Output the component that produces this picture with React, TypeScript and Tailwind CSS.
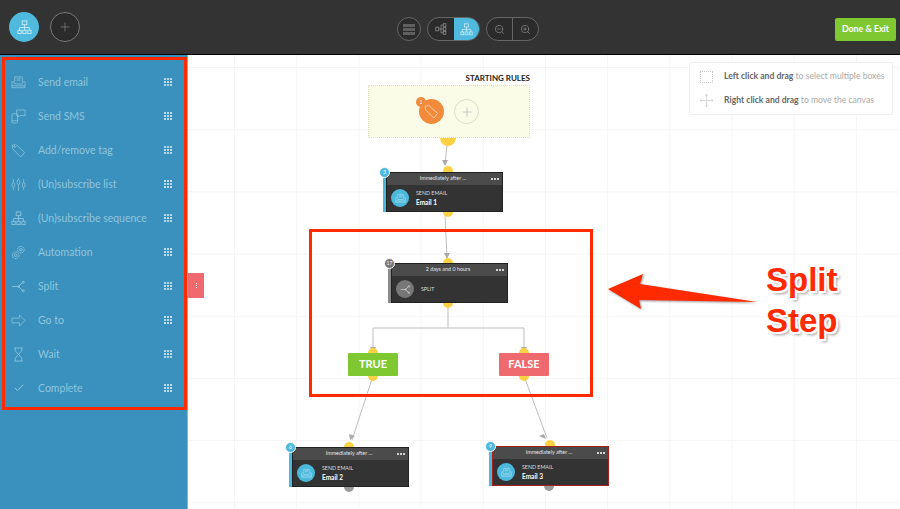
import { ReactNode } from 'react';
import { Plus, ZoomIn, ZoomOut, Check } from 'lucide-react';

const SendIcon = ({ className = '' }: { className?: string }) => (
  <svg viewBox="0 0 16 16" fill="none" stroke="currentColor" strokeWidth="0.8" className={className}>
    <path d="M4 7V2h8v5" />
    <path d="M6 4h4M6 5.500h4" />
    <path d="M1 7.500c0-1 1.800-1 2-.2L4 9.500h8l1-2.200c.3-.8 2-.8 2 .2v6H1z" />
    <path d="M1 11.500h14" />
  </svg>
);

const SplitIcon = ({ className = '' }: { className?: string }) => (
  <svg viewBox="0 0 16 16" fill="none" stroke="currentColor" strokeWidth="0.9" className={className}>
    <path d="M1 8h7l4-4M8 8l4 4" />
    <circle cx="13" cy="3.500" r="1.100" />
    <circle cx="13" cy="12.500" r="1.100" />
    <circle cx="8" cy="8" r="0.900" />
  </svg>
);

const TreeIcon = ({ className = '' }: { className?: string }) => (
  <svg viewBox="0 0 16 16" fill="none" stroke="currentColor" strokeWidth="0.9" className={className}>
    <rect x="5.500" y="1" width="5" height="4" />
    <rect x="1" y="11" width="3.500" height="3.500" />
    <rect x="6.200" y="11" width="3.500" height="3.500" />
    <rect x="11.500" y="11" width="3.500" height="3.500" />
    <path d="M8 5v6M2.800 11V8h10.400v3" />
  </svg>
);

const sideItems: { label: string; icon: ReactNode }[] = [
  { label: 'Send email', icon: <SendIcon className="h-[15px] w-[15px]" /> },
  {
    label: 'Send SMS',
    icon: (
      <svg viewBox="0 0 16 16" fill="none" stroke="currentColor" strokeWidth="0.8" className="h-[15px] w-[15px]">
        <rect x="1" y="5" width="6" height="10" rx="1" />
        <path d="M1 12.500h6" />
        <path d="M6 1h9v6H9.500L8 8.500V7H6z" />
      </svg>
    ),
  },
  {
    label: 'Add/remove tag',
    icon: (
      <svg viewBox="0 0 16 16" fill="none" stroke="currentColor" strokeWidth="0.8" className="h-[15px] w-[15px]">
        <path d="M1 2.500 5 1.500l9.500 8.500-4 5L2 6.500z" />
        <circle cx="3.800" cy="3.800" r="0.800" />
      </svg>
    ),
  },
  {
    label: '(Un)subscribe list',
    icon: (
      <svg viewBox="0 0 16 16" fill="none" stroke="currentColor" strokeWidth="0.8" className="h-[15px] w-[15px]">
        <path d="M2.500 2v12M8 1v14M13.500 2v12" />
        <ellipse cx="2.500" cy="8.500" rx="1.500" ry="2.500" fill="#3a91bd" />
        <ellipse cx="8" cy="5.500" rx="1.500" ry="2.500" fill="#3a91bd" />
        <ellipse cx="13.500" cy="8.500" rx="1.500" ry="2.500" fill="#3a91bd" />
      </svg>
    ),
  },
  { label: '(Un)subscribe sequence', icon: <TreeIcon className="h-[15px] w-[15px]" /> },
  {
    label: 'Automation',
    icon: (
      <svg viewBox="0 0 16 16" fill="none" stroke="currentColor" strokeWidth="1" className="h-[15px] w-[15px]">
        <circle cx="10.500" cy="5" r="3.500" strokeDasharray="1.800 0.500" />
        <circle cx="10.500" cy="5" r="1.300" />
        <circle cx="5" cy="11" r="3.500" strokeDasharray="1.800 0.500" />
        <circle cx="5" cy="11" r="1.300" />
      </svg>
    ),
  },
  { label: 'Split', icon: <SplitIcon className="h-[15px] w-[15px]" /> },
  {
    label: 'Go to',
    icon: (
      <svg viewBox="0 0 16 16" fill="none" stroke="currentColor" strokeWidth="0.8" className="h-[15px] w-[15px]">
        <path d="M1 5.500h8V2l6 6-6 6v-3.500H1z" />
      </svg>
    ),
  },
  {
    label: 'Wait',
    icon: (
      <svg viewBox="0 0 16 16" fill="none" stroke="currentColor" strokeWidth="0.9" className="h-[15px] w-[15px]">
        <path d="M3.500 1h9M3.500 15h9" />
        <path d="M4.500 1v3L8 8l3.500-4V1M4.500 15v-3L8 8l3.500 4v3" />
      </svg>
    ),
  },
  { label: 'Complete', icon: <Check className="ml-[2px] h-[12px] w-[12px]" strokeWidth={2} /> },
];

const Grip = () => (
  <div className="grid grid-cols-3 gap-px">
    {Array.from({ length: 9 }).map((_, i) => (
      <span key={i} className="h-[2px] w-[2px] bg-[#b9dbea]" />
    ))}
  </div>
);

const SideRow = ({ label, icon }: { label: string; icon: ReactNode }) => (
  <div className="flex h-[34px] items-center pl-[11px] pr-[15px] text-[#8fc5de]">
    <span className="flex w-[27px] shrink-0">{icon}</span>
    <span className="flex-1 text-[10.500px] leading-none">{label}</span>
    <Grip />
  </div>
);

const StepCard = ({
  place,
  title,
  badge,
  kind,
  name,
  grey,
  outline,
}: {
  place: string;
  title: string;
  badge: string;
  kind: string;
  name?: string;
  grey?: boolean;
  outline?: string;
}) => (
  <div className={`absolute h-[40px] w-[120px] ${place}`}>
    <div className={`flex h-full border-l-[3px] ${grey ? 'border-l-[#8a8a8a]' : 'border-l-[#4bb8dc]'}`}>
      <div className={`flex flex-1 flex-col border bg-[#333] ${outline ?? 'border-[#222]'}`}>
        <div className="relative flex h-[12px] items-center justify-center bg-[#4b4b4b] pr-[3px] text-[5.400px] leading-none text-[#e4e4e4]">
          {title}
          <span className="absolute right-[3px] flex gap-[1px]">
            <i className="h-[2px] w-[2px] rounded-full bg-white" />
            <i className="h-[2px] w-[2px] rounded-full bg-white" />
            <i className="h-[2px] w-[2px] rounded-full bg-white" />
          </span>
        </div>
        <div className="flex flex-1 items-center pl-[4px]">
          <span
            className={`flex h-[18px] w-[18px] items-center justify-center rounded-full ${
              grey ? 'bg-[#777] text-[#ddd]' : 'bg-[#4bb8dc] text-[#b5e4f3]'
            }`}
          >
            {grey ? <SplitIcon className="h-[11px] w-[11px]" /> : <SendIcon className="h-[11px] w-[11px]" />}
          </span>
          <div className="ml-[7px]">
            <div className="text-[5.300px] leading-[8px] text-[#ddd]">{kind}</div>
            {name && <div className="mt-[1px] text-[6.500px] font-bold leading-[9px] text-white">{name}</div>}
          </div>
        </div>
      </div>
    </div>
    <span
      className={`absolute -left-[4px] -top-[5px] flex h-[11px] w-[11px] items-center justify-center rounded-full border border-white text-[5px] leading-none text-white ${
        grey ? 'bg-[#777]' : 'bg-[#4bb8dc]'
      }`}
    >
      {badge}
    </span>
  </div>
);

const Dot = ({ place, grey }: { place: string; grey?: boolean }) => (
  <span className={`absolute h-[10px] w-[10px] rounded-full ${grey ? 'bg-[#9a9a9a]' : 'bg-[#fdd144]'} ${place}`} />
);

export default function App() {
  return (
    <div className="flex h-[509px] w-[900px] flex-col overflow-hidden bg-white font-[Lato,sans-serif]">
      <header className="flex h-[55px] shrink-0 items-center border-b border-black bg-[#333] pl-[9px] pr-[4px]">
        <div className="flex w-[388px] items-center gap-[11px]">
          <span className="flex h-[30px] w-[30px] items-center justify-center rounded-full bg-[#4fb9de] text-[#cfeef8]">
            <TreeIcon className="h-[15px] w-[15px]" />
          </span>
          <span className="flex h-[30px] w-[30px] items-center justify-center rounded-full border border-[#777] bg-[#2b2b2b] text-[#999]">
            <Plus className="h-[14px] w-[14px]" strokeWidth={1} />
          </span>
        </div>
        <div className="mt-[4px] flex items-center gap-[6px]">
          <span className="flex h-[24px] w-[24px] items-center justify-center rounded-full border border-[#666] bg-[#2b2b2b]">
            <span className="flex flex-col gap-px">
              <i className="h-[3px] w-[12px] bg-[#5f5f5f]" />
              <i className="h-[3px] w-[12px] bg-[#5f5f5f]" />
              <i className="h-[3px] w-[12px] bg-[#5f5f5f]" />
            </span>
          </span>
          <div className="flex h-[24px] w-[53px] overflow-hidden rounded-full border border-[#666] bg-[#2b2b2b]">
            <span className="flex flex-1 items-center justify-center text-[#999]">
              <TreeIcon className="h-[12px] w-[12px] -rotate-90" />
            </span>
            <span className="flex flex-1 items-center justify-center bg-[#4fb9de] text-[#cfeef8]">
              <TreeIcon className="h-[13px] w-[13px]" />
            </span>
          </div>
          <div className="flex h-[24px] w-[53px] overflow-hidden rounded-full border border-[#666] bg-[#2b2b2b] text-[#999]">
            <span className="flex flex-1 items-center justify-center border-r border-[#666]">
              <ZoomOut className="h-[11px] w-[11px]" strokeWidth={1.300} />
            </span>
            <span className="flex flex-1 items-center justify-center">
              <ZoomIn className="h-[11px] w-[11px]" strokeWidth={1.300} />
            </span>
          </div>
        </div>
        <button className="ml-auto mt-[4px] h-[23px] w-[61px] rounded-[2px] bg-[#7fc832] text-[8.800px] font-bold leading-none text-white">
          Done &amp; Exit
        </button>
      </header>

      <div className="relative flex flex-1">
        <aside className="w-[188px] shrink-0 border-r border-[#7db9d7] bg-[#3a91bd] pt-[10px]">
          {sideItems.map((item) => (
            <SideRow key={item.label} label={item.label} icon={item.icon} />
          ))}
        </aside>

        <main className="relative flex-1 bg-[linear-gradient(to_right,#f5f5f5_1px,transparent_1px),linear-gradient(to_bottom,#f5f5f5_1px,transparent_1px)] bg-[size:62.2px_62.2px] bg-[position:46px_12px]">
          <div className="absolute left-0 top-[218px] flex h-[25px] w-[16px] items-center justify-center bg-[#f0696e]">
            <span className="flex flex-col gap-[1px]">
              <i className="h-[1px] w-[1px] bg-white" />
              <i className="h-[1px] w-[1px] bg-white" />
              <i className="h-[1px] w-[1px] bg-white" />
            </span>
          </div>

          <div className="absolute left-[501px] top-[7px] flex h-[53px] w-[204px] flex-col justify-center gap-[11px] rounded-[2px] border border-[#eee] bg-white pl-[10px] text-[8.600px] leading-[11px] whitespace-nowrap text-[#aaa]">
            <div className="flex items-center gap-[11px]">
              <span className="h-[12px] w-[13px] border border-dotted border-[#ccc]" />
              <span>
                <b className="text-[#666]">Left click and drag</b> to select multiple boxes
              </span>
            </div>
            <div className="flex items-center gap-[11px]">
              <svg viewBox="0 0 14 14" fill="none" stroke="#d4d4d4" strokeWidth="1" className="h-[13px] w-[13px]">
                <path d="M7 0v14M0 7h14M5.500 1.500 7 0l1.500 1.500M5.500 12.500 7 14l1.500-1.500M1.500 5.500 0 7l1.500 1.500M12.500 5.500 14 7l-1.500 1.500" />
              </svg>
              <span>
                <b className="text-[#666]">Right click and drag</b> to move the canvas
              </span>
            </div>
          </div>

          <svg viewBox="0 0 712 454" fill="none" stroke="#bdbdbd" strokeWidth="1" className="absolute inset-0 h-[454px] w-[712px]">
            <path d="M259 90 257 110M255 117 259 203M260 248v25M185 293v-20h151v20M185 321 164 385M336 321 359 383" />
            <path d="M254 105h6l-3 6zM256 198h6l-3 6zM182 292h6l-3 6zM333 292h6l-3 6zM161 379l6 2-5 4zM356 379l-5 2 7 3z" fill="#aaa" stroke="none" />
          </svg>

          <Dot place="left-[255px] top-[111px]" />
          <Dot place="left-[255px] top-[152px]" />
          <Dot place="left-[255px] top-[203px]" />
          <Dot place="left-[255px] top-[243px]" />
          <Dot place="left-[180px] top-[293px]" />
          <Dot place="left-[180px] top-[316px]" />
          <Dot place="left-[331px] top-[293px]" />
          <Dot place="left-[331px] top-[316px]" />
          <Dot place="left-[156px] top-[387px]" />
          <Dot place="left-[156px] top-[427px]" grey />
          <Dot place="left-[357px] top-[385px]" />
          <Dot place="left-[356px] top-[426px]" grey />
          <span className="absolute left-[252px] top-[75px] h-[16px] w-[16px] rounded-full bg-[#fdd144]" />

          <div className="absolute left-[180px] top-[17px] w-[162px]">
            <div className="text-right text-[8px] font-bold leading-[12px] text-[#222]">STARTING RULES</div>
            <div className="mt-[1px] flex h-[53px] items-center justify-center gap-[10px] border border-dotted border-[#dedfbe] bg-[#fbfce8]">
              <span className="relative flex h-[25px] w-[25px] items-center justify-center rounded-full bg-[#f28c3c] text-[#fbd9bd]">
                <svg viewBox="0 0 16 16" fill="none" stroke="currentColor" strokeWidth="0.9" className="h-[15px] w-[15px]">
                  <path d="M1 2.500 5 1.500l9.500 8.500-4 5L2 6.500z" />
                </svg>
                <span className="absolute -left-[3px] -top-[2px] flex h-[10px] w-[10px] items-center justify-center rounded-full bg-[#f28c3c] text-[5px] leading-none text-white">
                  1
                </span>
              </span>
              <span className="flex h-[25px] w-[25px] items-center justify-center rounded-full border border-[#ddddc8] text-[#aaa]">
                <Plus className="h-[14px] w-[14px]" strokeWidth={1} />
              </span>
            </div>
          </div>

          <StepCard place="left-[195px] top-[117px]" title="Immediately after ..." badge="3" kind="SEND EMAIL" name="Email 1" />
          <StepCard place="left-[200px] top-[208px]" title="2 days and 0 hours" badge="17" kind="SPLIT" grey />
          <StepCard place="left-[101px] top-[392px]" title="Immediately after ..." badge="6" kind="SEND EMAIL" name="Email 2" />
          <StepCard
            place="left-[301px] top-[391px]"
            title="Immediately after ..."
            badge="9"
            kind="SEND EMAIL"
            name="Email 3"
            outline="border-[#a8201c]"
          />

          <div className="absolute left-[160px] top-[298px] flex h-[23px] w-[50px] items-center justify-center rounded-[1px] bg-[#7fc832] text-[11px] font-bold text-white">
            TRUE
          </div>
          <div className="absolute left-[311px] top-[298px] flex h-[23px] w-[50px] items-center justify-center rounded-[1px] bg-[#ee6a6e] text-[11px] font-bold text-white">
            FALSE
          </div>

          <div className="absolute left-[121px] top-[174px] h-[168px] w-[284px] border-[3px] border-[#ff2a00]" />

          <svg viewBox="0 0 160 45" className="absolute left-[416px] top-[216px] h-[45px] w-[160px] drop-shadow-[1px_1px_1px_rgba(0,0,0,0.4)]">
            <polygon points="4,18 39,3 36,13 153,31 35,29 37,38" fill="#ff2a00" />
          </svg>

          <div className="absolute left-[578px] top-[204px] font-['Liberation_Sans',sans-serif] text-[33px] font-bold leading-[41px] text-[#ff2a00] [text-shadow:-2px_-1px_0_#fff,2px_-1px_0_#fff,-1px_2px_0_#fff,2px_2px_0_#fff,3px_3px_3px_#999]">
            <div>Split</div>
            <div>Step</div>
          </div>
        </main>

        <div className="absolute left-[2px] top-[2px] h-[353px] w-[185px] border-[3px] border-[#ff2a00]" />
      </div>
    </div>
  );
}
